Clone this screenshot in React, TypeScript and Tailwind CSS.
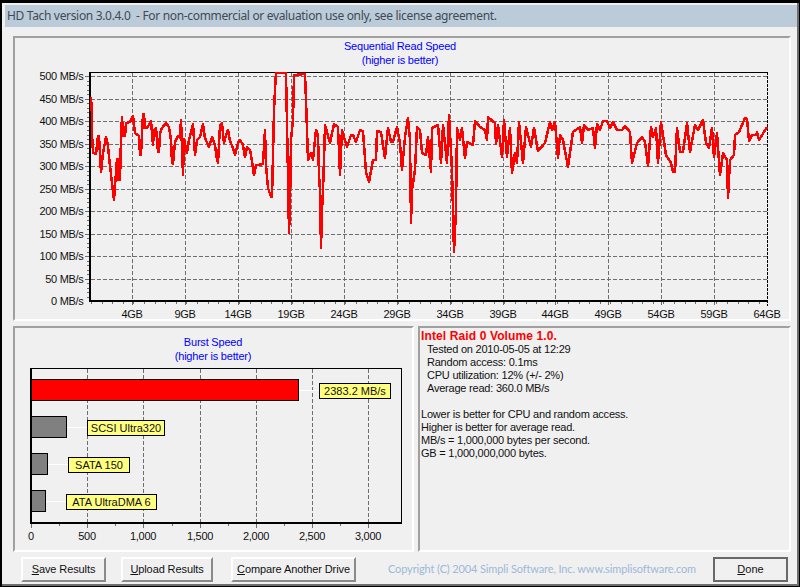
const font = "Liberation Sans, Arial, sans-serif";

const trace =
  "91,97 92,115 92,133 93,153 96,154 98,136 99,136 101,172 103,153 106,137 108,146 109,157 112,183 114,200 115,186 117,159 118,180 119,159 120,180 121,138 122,117 123,136 125,136 126,123 130,122 133,116 135,133 139,136 140,155 141,155 143,114 144,114 145,128 147,128 151,121 153,145 154,130 156,128 158,152 159,152 160,133 162,128 166,123 169,127 171,140 172,163 173,164 175,142 178,136 180,138 181,120 183,175 184,139 187,153 189,140 193,124 195,155 197,140 200,137 203,124 205,138 209,147 212,137 215,145 217,160 218,163 220,125 222,123 224,143 226,135 228,130 230,141 233,148 235,155 238,143 240,140 243,145 245,157 247,147 250,150 251,155 254,175 256,165 258,165 263,164 265,130 266,165 268,188 271,197 272,197 273,155 274,110 275,90 276,73 286,73 288,175 289,233 290,205 291,140 293,120 294,75 305,74 306,100 307,130 308,160 311,153 313,160 316,130 318,135 319,175 320,190 321,248 322,210 323,190 324,160 325,125 330,143 334,124 338,127 340,175 342,130 347,147 351,135 353,135 356,142 360,130 363,131 366,172 369,182 373,160 376,160 377,131 381,132 385,158 388,128 391,142 393,142 397,127 400,143 402,170 405,137 408,118 410,140 411,223 412,190 415,170 417,127 420,130 422,153 426,155 428,137 431,172 432,128 438,125 441,163 443,125 447,163 449,115 452,170 454,252 456,210 457,128 460,140 462,128 465,158 467,142 473,145 475,121 480,127 485,130 487,140 488,117 495,123 496,144 498,125 502,157 504,120 507,157 510,128 512,173 515,153 517,163 519,122 523,163 526,127 531,147 534,128 538,151 545,143 550,122 552,130 555,122 558,158 560,135 563,140 568,167 573,132 580,127 582,143 584,125 588,130 593,128 595,148 597,124 600,130 603,121 607,121 610,128 613,122 617,130 622,130 625,126 630,132 632,163 637,143 642,137 645,142 648,166 651,127 653,137 656,128 658,163 661,122 666,155 671,163 673,172 675,172 677,128 680,152 683,152 687,123 690,152 695,125 698,130 703,120 706,143 709,148 712,128 714,157 717,133 720,175 723,153 727,160 728,198 730,160 734,155 735,135 739,132 745,118 747,119 749,141 752,135 756,135 757,132 759,140 767,127";

const speedRows = [
  { label: "500 MB/s", y: 76 },
  { label: "450 MB/s", y: 99 },
  { label: "400 MB/s", y: 121 },
  { label: "350 MB/s", y: 144 },
  { label: "300 MB/s", y: 166 },
  { label: "250 MB/s", y: 189 },
  { label: "200 MB/s", y: 211 },
  { label: "150 MB/s", y: 234 },
  { label: "100 MB/s", y: 256 },
  { label: "50 MB/s", y: 279 },
];

const sizeCols = [
  { label: "4GB", x: 132 },
  { label: "9GB", x: 185 },
  { label: "14GB", x: 238 },
  { label: "19GB", x: 291 },
  { label: "24GB", x: 344 },
  { label: "29GB", x: 397 },
  { label: "34GB", x: 450 },
  { label: "39GB", x: 503 },
  { label: "44GB", x: 555 },
  { label: "49GB", x: 608 },
  { label: "54GB", x: 661 },
  { label: "59GB", x: 714 },
  { label: "64GB", x: 767 },
];

const burstCols = [
  { label: "500", x: 87 },
  { label: "1,000", x: 143 },
  { label: "1,500", x: 200 },
  { label: "2,000", x: 256 },
  { label: "2,500", x: 312 },
  { label: "3,000", x: 368 },
];

const bars = [
  { label: "2383.2 MB/s", top: 379, right: 298, fill: "#ff0000", boxX: 319, boxW: 71 },
  { label: "SCSI Ultra320", top: 416, right: 66, fill: "#808080", boxX: 87, boxW: 77 },
  { label: "SATA 150", top: 453, right: 47, fill: "#808080", boxX: 68, boxW: 61 },
  { label: "ATA UltraDMA 6", top: 490, right: 45, fill: "#808080", boxX: 66, boxW: 90 },
];

const SpeedChart = () => {
  const minorX = Array.from({ length: 64 }, (_, i) => 91 + i * 10.6);
  const minorY = Array.from({ length: 50 }, (_, i) => 76 + i * 4.5);
  return (
    <svg width={774} height={252} viewBox="15 67 774 252" className="block" style={{ fontFamily: font }}>
      <g shapeRendering="crispEdges" fill="none">
        {speedRows.map((r) => (
          <line key={r.label} x1={85} x2={767} y1={r.y + 0.5} y2={r.y + 0.5} stroke="#6e6e6e" strokeDasharray="4 2" />
        ))}
        {sizeCols.slice(0, -1).map((c) => (
          <line key={c.label} x1={c.x + 0.5} x2={c.x + 0.5} y1={73} y2={306} stroke="#6e6e6e" strokeDasharray="4 2" />
        ))}
        {minorX.map((x) => (
          <line key={x} x1={Math.round(x) + 0.5} x2={Math.round(x) + 0.5} y1={302} y2={304} stroke="#6e6e6e" />
        ))}
        {minorY.map((y) => (
          <line key={y} x1={87} x2={89} y1={Math.round(y) + 0.5} y2={Math.round(y) + 0.5} stroke="#6e6e6e" />
        ))}
        <line x1={767.5} x2={767.5} y1={72} y2={306} stroke="#000" strokeDasharray="3 1" />
        <line x1={89} x2={768} y1={72.5} y2={72.5} stroke="#000" />
        <line x1={90} x2={90} y1={72} y2={302} stroke="#000" strokeWidth={2} />
        <line x1={89} x2={768} y1={301} y2={301} stroke="#000" strokeWidth={2} />
        <polyline points={trace} stroke="#ff0000" strokeWidth={2.5} strokeLinejoin="round" />
      </g>
      <g fontSize={11} fill="#111" letterSpacing={-0.3}>
        {speedRows.map((r) => (
          <text key={r.label} x={83.5} y={r.y + 4} textAnchor="end">
            {r.label}
          </text>
        ))}
        <text x={83.5} y={305} textAnchor="end">0 MB/s</text>
        {sizeCols.map((c) => (
          <text key={c.label} x={c.x} y={318} textAnchor="middle">
            {c.label}
          </text>
        ))}
      </g>
    </svg>
  );
};

const BurstChart = () => {
  const minor = Array.from({ length: 13 }, (_, i) => 31 + i * 28.1);
  return (
    <svg width={398} height={187} viewBox="15 363 398 187" className="block" style={{ fontFamily: font }}>
      <g shapeRendering="crispEdges" fill="none">
        {burstCols.map((c) => (
          <line key={c.label} x1={c.x + 0.5} x2={c.x + 0.5} y1={369} y2={522} stroke="#6e6e6e" strokeDasharray="4 2" />
        ))}
        {minor.map((x, i) => (
          <line key={x} x1={Math.round(x) + 0.5} x2={Math.round(x) + 0.5} y1={524} y2={i % 2 ? 526 : 528} stroke="#6e6e6e" />
        ))}
        <line x1={30} x2={402} y1={368.5} y2={368.5} stroke="#000" />
        <line x1={401.5} x2={401.5} y1={368} y2={524} stroke="#000" />
        <line x1={31} x2={31} y1={368} y2={524} stroke="#000" strokeWidth={2} />
        <line x1={30} x2={402} y1={523} y2={523} stroke="#000" strokeWidth={2} />
        {bars.map((b) => (
          <g key={b.label}>
            <line x1={b.right} x2={b.boxX} y1={b.top + 11.5} y2={b.top + 11.5} stroke="#fff" />
            <rect x={31.5} y={b.top + 0.5} width={b.right - 31} height={21} fill={b.fill} stroke="#000" />
            <rect x={b.boxX + 0.5} y={b.top + 4.5} width={b.boxW} height={15} fill="#ffff80" stroke="#000" />
          </g>
        ))}
      </g>
      <g fontSize={11} fill="#111">
        {bars.map((b) => (
          <text key={b.label} x={b.boxX + b.boxW / 2 + 0.5} y={b.top + 16} textAnchor="middle">
            {b.label}
          </text>
        ))}
        <g letterSpacing={-0.3}>
          <text x={31} y={540} textAnchor="middle">0</text>
          {burstCols.map((c) => (
            <text key={c.label} x={c.x} y={540} textAnchor="middle">
              {c.label}
            </text>
          ))}
        </g>
      </g>
    </svg>
  );
};

const ChartTitle = ({ title, className }: { title: string; className: string }) => (
  <div className={`text-center text-[11px] leading-[14px] tracking-[-0.2px] text-[#0000ff] ${className}`}>
    <div>{title}</div>
    <div>(higher is better)</div>
  </div>
);

const Button = ({ first, rest, className }: { first: string; rest: string; className: string }) => (
  <button
    type="button"
    className={`h-[25px] bg-[#f0f0f0] text-[11px] tracking-[-0.1px] whitespace-nowrap text-[#111] border-t-2 border-l-2 border-b-2 border-r-2 border-t-white border-l-white border-b-[#8a8a8a] border-r-[#8a8a8a] ${className}`}
  >
    <u>{first}</u>
    {rest}
  </button>
);

const App = () => {
  return (
    <div
      className="w-[800px] h-[587px] bg-black pt-[3px] pl-[2px] pr-px pb-px overflow-hidden"
      style={{ fontFamily: font }}
    >
      <div className="h-full bg-[#f0f0f0] border-r-2 border-b-2 border-[#6e6e6e] flex flex-col">
        <div className="mt-[2px] ml-[3px] h-[22px] bg-[#bccbd9] pl-[2px] flex items-center text-[12px] tracking-[-0.33px] text-[#404a54] font-['Noto_Sans',sans-serif] whitespace-pre shrink-0">
          HD Tach version 3.0.4.0  - For non-commercial or evaluation use only, see license agreement.
        </div>

        <div className="mt-[9px] ml-[11px] w-[778px] h-[285px] border-t-2 border-l-2 border-t-[#a0a0a0] border-l-[#a0a0a0] border-r-2 border-b-2 border-r-white border-b-white pt-px shrink-0">
          <ChartTitle title="Sequential Read Speed" className="pr-[4px]" />
          <SpeedChart />
        </div>

        <div className="mt-[5px] ml-[11px] flex gap-[4px] shrink-0">
          <div className="w-[401px] h-[226px] border-t-2 border-l-2 border-t-[#a0a0a0] border-l-[#a0a0a0] border-r-2 border-b-2 border-r-white border-b-white pt-[7px]">
            <ChartTitle title="Burst Speed" className="pr-px" />
            <BurstChart />
          </div>
          <div className="w-[373px] h-[226px] border-t-2 border-l-2 border-t-[#a0a0a0] border-l-[#a0a0a0] border-r-2 border-b-2 border-r-white border-b-white pt-[2px] pl-[1px] text-[11px] leading-[13px] tracking-[-0.22px] text-[#111]">
            <div className="text-[12px] font-bold text-[#ff0000] leading-[13px] tracking-[0.12px]">Intel Raid 0 Volume 1.0.</div>
            <div className="pl-[6px]">
              <div>Tested on 2010-05-05 at 12:29</div>
              <div>Random access: 0.1ms</div>
              <div>CPU utilization: 12% (+/- 2%)</div>
              <div>Average read: 360.0 MB/s</div>
            </div>
            <div className="mt-[13px]">
              <div>Lower is better for CPU and random access.</div>
              <div>Higher is better for average read.</div>
              <div>MB/s = 1,000,000 bytes per second.</div>
              <div>GB = 1,000,000,000 bytes.</div>
            </div>
          </div>
        </div>

        <div className="mt-[5px] ml-[19px] flex items-center shrink-0">
          <Button first="S" rest="ave Results" className="w-[85px]" />
          <Button first="U" rest="pload Results" className="w-[92px] ml-[15px]" />
          <Button first="C" rest="ompare Another Drive" className="w-[125px] ml-[18px]" />
          <span className="ml-[32px] w-[325px] text-[11px] tracking-[-0.13px] text-[#9db8d8] font-['Lato',sans-serif] whitespace-nowrap">
            Copyright (C) 2004 Simpli Software, Inc. www.simplisoftware.com
          </span>
          <button
            type="button"
            className="h-[25px] w-[75px] bg-[#f0f0f0] text-[11px] text-[#111] border-2 border-[#696969]"
          >
            <u>D</u>one
          </button>
        </div>
      </div>
    </div>
  );
};

export default App;
